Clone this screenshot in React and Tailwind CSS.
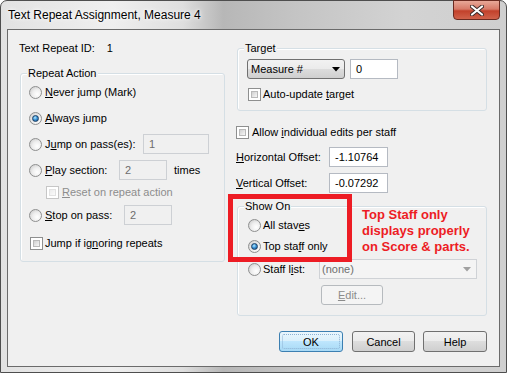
import React from 'react'

const U = ({ children }) => <span className="underline underline-offset-[1px]">{children}</span>

const Radio = ({ checked }) => (
  <span className="w-[13px] h-[13px] shrink-0 rounded-full border border-[#8e8f8f] bg-[radial-gradient(circle_at_65%_65%,#ffffff_0%,#eeeeee_45%,#c4c4c4_100%)] flex items-center justify-center">
    {checked && (
      <span className="w-[7px] h-[7px] rounded-full border border-[#1d3f63] bg-[radial-gradient(circle_at_40%_35%,#b8ecff_0%,#3c94d8_45%,#114b80_100%)]" />
    )}
  </span>
)

const Check = ({ disabled }) => (
  <span
    className={`w-[13px] h-[13px] shrink-0 border p-[2px] bg-white ${
      disabled ? 'border-[#c6c6c6]' : 'border-[#8e8f8f]'
    }`}
  >
    <span
      className={`block w-full h-full border ${
        disabled
          ? 'border-[#e2e2e2] bg-[linear-gradient(135deg,#ececec,#fbfbfb)]'
          : 'border-[#b9b9b9] bg-[linear-gradient(135deg,#d0d0d0,#f7f7f7)]'
      }`}
    />
  </span>
)

const Field = ({ value, w, disabled }) => (
  <div
    className={`${w} h-[20px] shrink-0 border flex items-center pl-[5px] ${
      disabled ? 'border-[#cdd0d4] bg-[#f0f0f0] text-[#6d6d6d]' : 'border-[#b5bac2] bg-white text-black'
    }`}
  >
    {value}
  </div>
)

const Arrow = ({ color }) => (
  <svg width="8" height="5" viewBox="0 0 8 5">
    <path d="M0 0 H8 L4 4.5 Z" fill={color} />
  </svg>
)

const Group = ({ label, className, children }) => (
  <div className={`relative border border-[#d5dfe5] rounded-[3px] shadow-[inset_1px_1px_0_#ffffff] ${className}`}>
    <span className="absolute left-[6px] top-[-8px] px-[1px] bg-[#f0f0f0] leading-[14px]">{label}</span>
    {children}
  </div>
)

const Button = ({ children, className, primary }) => (
  <div
    className={`relative h-[21px] rounded-[3px] border flex items-center justify-center ${
      primary
        ? 'border-[#3c7fb1] bg-[linear-gradient(180deg,#eaf6fd_0%,#d9f0fc_50%,#bee6fd_50%,#a7d9f5_100%)]'
        : 'border-[#707070] bg-[linear-gradient(180deg,#f2f2f2_0%,#ebebeb_50%,#dddddd_50%,#cfcfcf_100%)]'
    } ${className}`}
  >
    {primary && <span className="absolute inset-[2px] rounded-[2px] border border-dotted border-[#8db2d3]" />}
    <span className="relative">{children}</span>
  </div>
)

export default function App() {
  return (
    <div className="relative w-[507px] h-[373px] overflow-hidden font-['Liberation_Sans',Arial,sans-serif] text-[11px] leading-[14px] text-black">
      <div className="w-full h-full flex flex-col rounded-t-[7px] border border-[#4e4e4e] bg-[linear-gradient(90deg,#e2e2e2_0%,#efefef_22%,#dedede_36%,#b7b7b7_44%,#c4c4c4_58%,#d3d3d3_80%,#cfcfcf_100%)]">
        {/* Title bar */}
        <div className="h-[28px] shrink-0 flex items-start">
          <span className="pl-[7px] pt-[7px] text-[12px] leading-[14px] text-black [text-shadow:0_0_6px_#ffffff,0_0_3px_#ffffff]">
            Text Repeat Assignment, Measure 4
          </span>
          <div className="ml-auto mr-[6px] mt-[-1px] w-[47px] h-[20px] rounded-b-[4px] border border-[#6b2a20] bg-[linear-gradient(180deg,#e8a898_0%,#d77a68_45%,#c2412b_55%,#d0624b_100%)] flex items-center justify-center">
            <svg width="14" height="11" viewBox="0 0 14 11">
              <path d="M2 1.5 L12 9.5 M12 1.5 L2 9.5" stroke="#3b2a28" strokeWidth="4" strokeLinecap="round" />
              <path d="M2 1.5 L12 9.5 M12 1.5 L2 9.5" stroke="#ffffff" strokeWidth="2.2" strokeLinecap="round" />
            </svg>
          </div>
        </div>

        {/* Client area */}
        <div className="mx-[6px] h-[338px] border border-[#6b6b6b] bg-[#f0f0f0] flex flex-col">
          <div className="flex items-start">
            {/* Left column */}
            <div className="ml-[12px] w-[205px] pt-[11px]">
              <div className="h-[14px] flex items-center -ml-[1px]">
                Text Repeat ID:<span className="ml-[12px]">1</span>
              </div>

              <Group label="Repeat Action" className="mt-[18px] pt-[8px] pb-[8px]">
                <div className="h-[20px] flex items-center pl-[8px]">
                  <Radio />
                  <span className="ml-[3px]"><U>N</U>ever jump (Mark)</span>
                </div>
                <div className="mt-[6px] h-[20px] flex items-center pl-[8px]">
                  <Radio checked />
                  <span className="ml-[3px]"><U>A</U>lways jump</span>
                </div>
                <div className="mt-[6px] h-[20px] flex items-center pl-[8px]">
                  <Radio />
                  <span className="ml-[3px] w-[98px]">J<U>u</U>mp on pass(es):</span>
                  <Field value="1" w="w-[66px]" disabled />
                </div>
                <div className="mt-[6px] h-[20px] flex items-center pl-[8px]">
                  <Radio />
                  <span className="ml-[3px] w-[74px]"><U>P</U>lay section:</span>
                  <Field value="2" w="w-[48px]" disabled />
                  <span className="ml-[7px]">times</span>
                </div>
                <div className="mt-[2px] h-[20px] flex items-center pl-[25px] text-[#8d8d8d]">
                  <Check disabled />
                  <span className="ml-[3px]"><U>R</U>eset on repeat action</span>
                </div>
                <div className="mt-[3px] h-[20px] flex items-center pl-[8px]">
                  <Radio />
                  <span className="ml-[3px] w-[79px]"><U>S</U>top on pass:</span>
                  <Field value="2" w="w-[48px]" disabled />
                </div>
                <div className="mt-[8px] h-[20px] flex items-center pl-[9px]">
                  <Check />
                  <span className="ml-[2px]">Jump if ig<U>n</U>oring repeats</span>
                </div>
              </Group>
            </div>

            {/* Right column */}
            <div className="ml-[12px] w-[250px] pt-[18px]">
              <Group label="Target" className="pt-[10px] pb-[8px]">
                <div className="flex items-center pl-[9px]">
                  <div className="w-[98px] h-[20px] rounded-[3px] border border-[#707070] bg-[linear-gradient(180deg,#f2f2f2_0%,#ebebeb_50%,#dddddd_50%,#cfcfcf_100%)] flex items-center pl-[3px] pr-[4px]">
                    <span className="flex-1">Measure #</span>
                    <Arrow color="#000000" />
                  </div>
                  <div className="ml-[5px]">
                    <Field value="0" w="w-[48px]" />
                  </div>
                </div>
                <div className="mt-[7px] h-[16px] flex items-center pl-[10px]">
                  <Check />
                  <span className="ml-[2px]">Auto-update <U>t</U>arget</span>
                </div>
              </Group>

              <div className="mt-[13px] h-[16px] flex items-center -ml-[1px]">
                <Check />
                <span className="ml-[3px]">Allow <U>i</U>ndividual edits per staff</span>
              </div>
              <div className="mt-[7px] h-[20px] flex items-center -ml-[1px]">
                <span className="w-[93px]"><U>H</U>orizontal Offset:</span>
                <Field value="-1.10764" w="w-[59px]" />
              </div>
              <div className="mt-[6px] h-[20px] flex items-center -ml-[1px]">
                <span className="w-[93px]"><U>V</U>ertical Offset:</span>
                <Field value="-0.07292" w="w-[59px]" />
              </div>

              <Group label="Show On" className="mt-[13px] pt-[8px] pb-[10px]">
                <div className="h-[20px] flex items-center pl-[10px]">
                  <Radio />
                  <span className="ml-[2px]">All stav<U>e</U>s</span>
                </div>
                <div className="mt-[1px] h-[20px] flex items-center pl-[10px]">
                  <Radio checked />
                  <span className="ml-[2px]">Top sta<U>f</U>f only</span>
                </div>
                <div className="mt-[3px] h-[20px] flex items-center pl-[10px]">
                  <Radio />
                  <span className="ml-[2px] w-[56px]">Staff l<U>i</U>st:</span>
                  <div className="w-[158px] h-[20px] border border-[#cfd2d6] bg-[#f4f4f4] text-[#6d6d6d] flex items-center pl-[2px] pr-[5px]">
                    <span className="flex-1">(none)</span>
                    <Arrow color="#a0a0a0" />
                  </div>
                </div>
                <div className="mt-[6px] pl-[83px]">
                  <div className="w-[62px] h-[20px] rounded-[3px] border border-[#b6babe] bg-[#f4f4f4] text-[#8b8b8b] flex items-center justify-center">
                    <span><U>E</U>dit...</span>
                  </div>
                </div>
              </Group>
            </div>
          </div>

          {/* Buttons */}
          <div className="mt-[15px] flex justify-end pr-[12px]">
            <Button primary className="w-[64px] mr-[9px]">OK</Button>
            <Button className="w-[63px] mr-[8px]">Cancel</Button>
            <Button className="w-[64px]">Help</Button>
          </div>
        </div>
      </div>

      {/* Red annotation */}
      <div className="absolute left-[228px] top-[194px] w-[124px] h-[68px] border-[5px] border-[#ed1c24]" />
      <div className="absolute left-[362px] top-[207px] text-[13px] leading-[16px] font-bold text-[#ed1c24]">
        <div>Top Staff only</div>
        <div>displays properly</div>
        <div>on Score &amp; parts.</div>
      </div>
    </div>
  )
}
